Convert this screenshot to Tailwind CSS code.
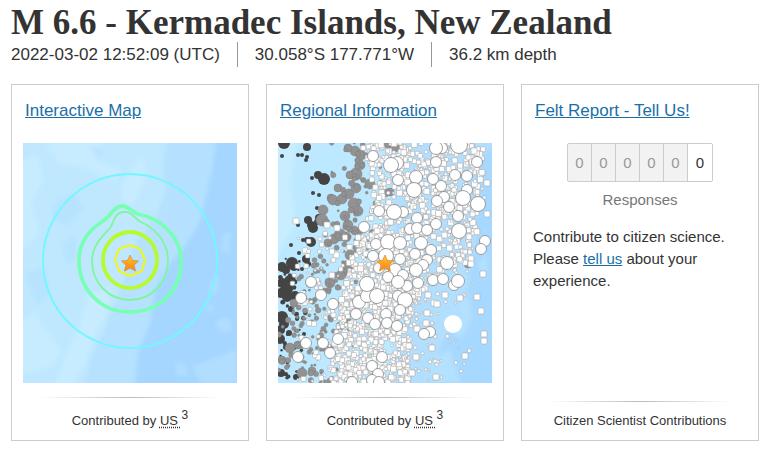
<!DOCTYPE html>
<html lang="en">
<head>
<meta charset="utf-8">
<title>M 6.6 - Kermadec Islands, New Zealand</title>
<script src="https://cdn.jsdelivr.net/npm/@tailwindcss/browser@4"></script>
</head>
<body class="bg-white text-[#333] font-['Liberation_Sans',Arial,sans-serif]">
<main class="pl-[11px] pr-[14px]">
  <header>
    <h1 class="pt-[4px] text-[35px] leading-[38px] font-bold font-['Liberation_Serif',serif]">M 6.6 - Kermadec Islands, New Zealand</h1>
    <ul class="flex flex-wrap text-[17px] leading-[25px]">
      <li class="pr-[17px]">2022-03-02 12:52:09 (UTC)</li>
      <li class="border-l border-[#999] px-[17px]">30.058°S 177.771°W</li>
      <li class="border-l border-[#999] px-[17px]">36.2 km depth</li>
    </ul>
  </header>

  <div class="mt-[17px] grid grid-cols-3 gap-[17px]">
    <section class="flex flex-col border border-[#ccc] px-[11px] pb-[9px]">
      <h2 class="px-[2px] pt-[13px] pb-[20px] text-[17px] leading-[25px]"><a href="#map" class="text-[#1a6fa8] underline">Interactive Map</a></h2>
      <svg class="block w-full" viewBox="0 0 214 240" role="img" aria-label="Shaking intensity contours">
        <defs>
          <linearGradient id="star" x1="0" y1="0" x2="0" y2="1"><stop offset="0" stop-color="#ffd24a"/><stop offset=".45" stop-color="#ffa51e"/><stop offset="1" stop-color="#f58a1c"/></linearGradient>
          <filter id="soft"><feGaussianBlur stdDeviation="2"/></filter>
        </defs>
        <rect width="214" height="240" fill="#b6e1ff"/>
        <g filter="url(#soft)">
          <path d="M-5-5H145L140 20 144 45 132 75 112 100 104 130 92 160 80 190 68 215 60 245H-5V-5Z" fill="#bfe8ff"/>
          <path d="M194-5 190 20 184 50 176 80 162 104 146 122 132 148 128 178 116 208 112 245H220V-5Z" fill="#a4d6ff"/>
          <path d="M144-5H194L188 30 176 76 160 98 144 104 148 70 140 30Z" fill="#b5e1ff"/>
          <path d="M-5 20 14 12 20 36 8 60 16 90-5 110ZM24 0 80-2 72 18 98 26 92 38 62 24 36 20ZM100 40 118 12 124 32 110 62 100 58ZM66 152 88 146 84 170 72 190 62 220 46 245 32 245 44 212 56 186ZM-5 180 12 170 22 188 38 206 30 222-5 232Z" fill="#c8ecff"/>
          <path d="M30 60 52 50 62 66 44 84 30 76ZM38 100 50 92 56 112 44 122ZM2 130 20 124 28 150 14 164ZM66 2 84 8 74 14Z" fill="#b8e3ff"/>
          <path d="M200 92 208 88 206 110 198 108ZM188 138 196 130 194 150 186 152ZM192 178 206 174 210 188 196 188ZM152 218 162 222 166 234 154 232ZM168 224 214 206 214 240 178 240ZM182 164 190 160 188 172Z" fill="#b1deff"/>
        </g>
        <g fill="none" stroke-linejoin="round">
          <circle cx="107" cy="118" r="87" stroke="#73f7ff" stroke-width="2"/>
          <path d="M99 63C105 63 109 69 115 71C140 76 158 95 158 118C158 148 136 169 107 169C78 169 56 147 56 117C56 99 66 87 80 78C88 73 91 63 99 63Z" stroke="#79ffb5" stroke-width="3.800"/>
          <path d="M100 69C108 68 110 73 116 78C134 86 145 100 145 118C145 140 128 157 107 157C86 157 69 140 69 118C69 102 80 93 87 85C91 80 91 70 100 69Z" stroke="#7df797" stroke-width="1.800"/>
          <ellipse cx="107" cy="117" rx="27" ry="28" stroke="#b5fb2e" stroke-width="3.800"/>
          <path d="M107 102 117 106 122 117 119 128 107 133 96 128 92 116 96 106Z" stroke="#f0f718" stroke-width="2"/>
        </g>
        <path d="M107 112 109.500 117.500 115.500 118 111 122 112.500 128 107 125 101.500 128 103 122 98.500 118 104.500 117.500Z" fill="url(#star)" stroke="#d98b35" stroke-width=".8"/>
      </svg>
      <div class="mx-auto mt-[14px] h-px w-[85%] bg-linear-to-r from-transparent via-[#bbb] to-transparent"></div>
      <p class="mt-[13px] text-center text-[13px] leading-[20px]">Contributed by <abbr title="USGS National Earthquake Information Center" class="underline decoration-dotted underline-offset-2">US </abbr><sup class="text-[12px]">3</sup></p>
    </section>

    <section class="flex flex-col border border-[#ccc] px-[11px] pb-[9px]">
      <h2 class="px-[2px] pt-[13px] pb-[20px] text-[17px] leading-[25px]"><a href="#region" class="text-[#1a6fa8] underline">Regional Information</a></h2>
      <svg class="block w-full" viewBox="0 0 214 240" role="img" aria-label="Historical seismicity around the epicenter">
        <rect width="214" height="240" fill="#bce9ff"/>
        <g filter="url(#soft)">
          <path d="M-5-5H20L12 40 18 80-5 120Z" fill="#c8edff"/>
          <path d="M110-5H220V245H112L124 180 116 100Z" fill="#b3dfff"/>
          <path d="M195 20 220 0V245H150L160 210 188 150 198 100Z" fill="#a7d8ff"/>
          <path d="M182 160 190 150 194 174 184 196 176 190ZM150 220 172 206 182 240H154ZM200 120 210 110 208 140Z" fill="#b4e1ff"/>
        </g>
        <g id="dark" fill="#444"></g>
        <g id="gray" fill="#929292" stroke="#7c7c7c" stroke-width=".5"></g>
        <g id="small" fill="#fff" stroke="#aaa" stroke-width=".6"></g>
        <g id="large" fill="#fff" stroke="#888" stroke-width=".8"></g>
        <circle cx="175" cy="181" r="9" fill="#fff"/>
        <path d="M107 112 109.500 117.500 115.500 118 111 122 112.500 128 107 125 101.500 128 103 122 98.500 118 104.500 117.500Z" fill="url(#star)" stroke="#d98b35" stroke-width=".8"/>
      </svg>
      <div class="mx-auto mt-[14px] h-px w-[85%] bg-linear-to-r from-transparent via-[#bbb] to-transparent"></div>
      <p class="mt-[13px] text-center text-[13px] leading-[20px]">Contributed by <abbr title="USGS National Earthquake Information Center" class="underline decoration-dotted underline-offset-2">US </abbr><sup class="text-[12px]">3</sup></p>
    </section>

    <section class="flex flex-col border border-[#ccc] px-[11px] pb-[9px]">
      <h2 class="px-[2px] pt-[13px] pb-[20px] text-[17px] leading-[25px]"><a href="#tellus" class="text-[#1a6fa8] underline">Felt Report - Tell Us!</a></h2>
      <div class="mx-auto grid w-[146px] grid-cols-6 divide-x divide-[#ccc] rounded-xs border border-[#ccc] bg-[#f2f2f2] text-center text-[15px] leading-[37px] text-[#999]">
        <span>0</span><span>0</span><span>0</span><span>0</span><span>0</span><span class="bg-white text-[#333]">0</span>
      </div>
      <p class="mt-[7px] text-center text-[15px] leading-[22px] text-[#777]">Responses</p>
      <p class="mt-[15px] text-[15px] leading-[22px]">Contribute to citizen science. Please <a href="#tellus" class="text-[#1a6fa8] underline">tell us</a> about your experience.</p>
      <div class="mx-auto mt-auto h-px w-[85%] bg-linear-to-r from-transparent via-[#bbb] to-transparent"></div>
      <p class="mt-[9px] text-center text-[13px] leading-[20px]">Citizen Scientist Contributions</p>
    </section>
  </div>
</main>
<script>
// Epicenters of past events: x, y, radius
const large = [[95,13,5],[119,20,6],[113,22,7],[120,37,5],[138,34,6],[136,47,7],[164,5,5],[158,5,6],[181,2,8],[158,19,5],[199,19,5],[177,32,5],[189,33,5],[155,36,5],[163,43,5],[189,47,5],[185,55,7],[200,61,7],[166,54,5],[159,58,5],[171,64,5],[180,73,5],[181,88,7],[101,68,5],[125,69,5],[116,69,7],[139,75,5],[86,84,5],[98,101,5],[110,99,7],[122,100,6],[132,86,5],[139,85,5],[149,87,5],[158,81,5],[143,100,6],[153,107,5],[137,111,5],[207,98,5],[203,106,5],[95,113,5],[122,116,5],[149,117,5],[169,120,6],[108,113,7],[33,139,5],[43,152,5],[23,155,5],[55,161,5],[81,159,6],[89,153,6],[99,153,7],[120,153,5],[127,157,7],[89,141,7],[101,125,5],[117,127,6],[110,134,5],[125,132,5],[145,122,5],[138,127,6],[129,143,5],[120,139,6],[140,140,5],[155,137,5],[165,136,5],[176,142,5],[180,138,6],[78,171,5],[90,175,5],[108,171,5],[122,167,5],[97,181,5],[109,180,5],[119,183,5],[152,189,5],[146,191,5],[60,196,5],[45,200,5],[28,200,5],[52,210,5],[20,214,5],[104,214,5],[94,223,5],[100,231,5],[74,239,5],[94,237,5],[101,239,5]];
const dark = [[6,0,6],[29,4,4],[46,36,6],[40,32,4],[34,35,2],[4,13,2],[20,12,2],[24,12,2],[29,14,2],[28,17,2],[35,50,2],[41,52,2],[39,65,2],[30,77,4],[35,85,5],[33,82,4],[20,82,2],[25,97,2],[33,99,5],[29,97,3],[13,102,2],[21,110,2],[14,120,6],[28,116,4],[41,75,4],[39,79,3],[16,123,5],[4,124,5],[8,127,4],[4,140,5],[12,138,6],[9,146,6],[17,153,5],[9,154,5],[3,150,5],[4,174,6],[6,181,5],[3,187,4],[2,196,5],[27,170,2],[30,121,3],[24,126,2],[13,166,3],[19,176,2],[11,190,3],[26,191,2],[8,204,3],[3,230,4],[18,234,3]];
const gray = [[77,8,5],[83,12,5],[70,5,4],[110,1,4],[117,4,5],[78,31,6],[72,32,4],[82,22,5],[60,45,4],[53,55,4],[55,57,5],[64,56,5],[71,51,5],[78,45,5],[76,61,6],[80,68,5],[92,41,5],[45,67,5],[44,77,6],[48,80,4],[67,73,5],[70,82,5],[77,88,4],[68,94,5],[56,96,5],[62,92,6],[50,100,4],[86,98,4],[80,105,5],[72,112,5],[107,50,4],[112,49,4],[190,121,4],[63,132,5],[70,125,5],[52,140,5],[16,160,4],[70,180,5],[12,205,5],[20,202,4],[4,217,4],[24,230,5],[34,228,4],[62,183,4]];
let seed = 11;
const rnd = () => (seed = (seed * 16807) % 2147483647) / 2147483647;
const circle = ([x, y, r]) => `<circle cx="${x}" cy="${y}" r="${r}"/>`;
const square = (x, y, s) => `<rect x="${x - s / 2}" y="${y - s / 2}" width="${s}" height="${s}" rx="1"/>`;
const lerp = (stops, y) => {
  const i = Math.max(1, stops.findIndex(s => s[0] >= y));
  const [a, b] = [stops[i - 1], stops[i]];
  return a[1] + (b[1] - a[1]) * (y - a[0]) / (b[0] - a[0]);
};
const leftEdge = [[0, 80], [60, 98], [110, 72], [150, 64], [240, 50]];
const rightEdge = [[0, 207], [60, 207], [120, 192], [150, 142], [180, 132], [240, 130]];
for (let i = 0; i < 200; i++) {
  const y = rnd() * 240;
  const mid = lerp([[0, 84], [60, 76], [110, 66], [160, 42], [240, 32]], y);
  const spread = y < 110 ? 32 : 44;
  gray.push([mid + (rnd() + rnd() - 1) * spread, y, 1 + rnd() * 2]);
}
for (let i = 0; i < 45; i++) dark.push([rnd() * 28, 112 + rnd() * 128, 1 + rnd() * 1.5]);
let small = '';
for (let i = 0; i < 1500; i++) {
  const y = rnd() * 240, l = lerp(leftEdge, y), r = lerp(rightEdge, y);
  small += square(l + rnd() * (r - l), y, rnd() < .4 ? 2 + rnd() * 2 : 4 + rnd() * 2);
}
for (let i = 0; i < 90; i++) {
  const y = 90 + rnd() * 150;
  small += square(14 + rnd() * 66, y, 2 + rnd() * 4);
}
for (let i = 0; i < 100; i++) small += square(130 + rnd() * rnd() * 80, 120 + rnd() * 118, 1.5 + rnd() * 2);
for (const [x, y] of [[205,131],[203,168],[206,191],[206,198],[187,213],[158,234],[199,154],[182,155],[167,152],[156,160],[149,170],[148,180],[138,214],[154,205],[134,230],[209,40],[196,8],[209,71],[193,121],[18,78],[49,82],[59,85],[150,152],[159,161],[139,186],[131,203]]) small += square(x, y, 6);
document.getElementById('dark').innerHTML = dark.map(circle).join('');
document.getElementById('gray').innerHTML = gray.map(circle).join('');
document.getElementById('small').innerHTML = small;
document.getElementById('large').innerHTML = large.map(([x, y, r]) => circle([x, y, r + .5])).join('');
</script>
</body>
</html>
